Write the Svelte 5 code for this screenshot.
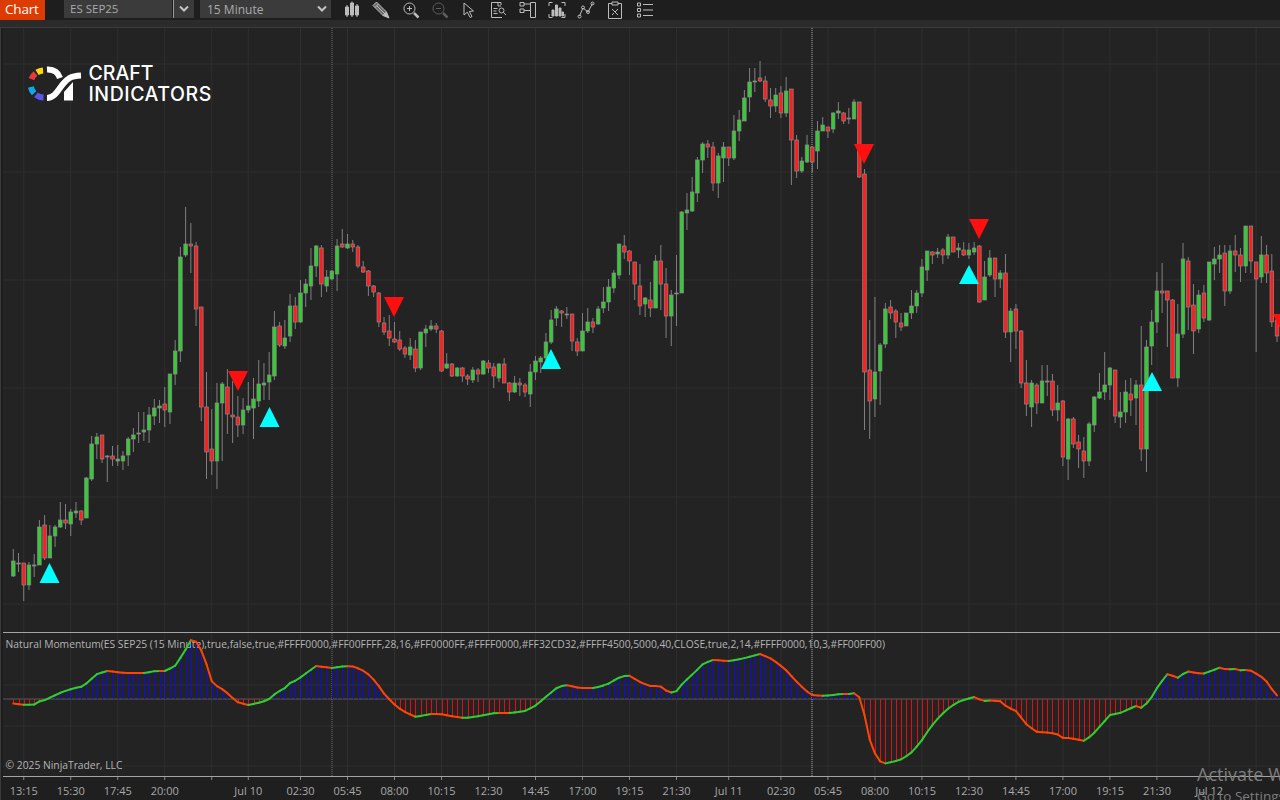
<script>
	// t, b, hi, lo, colour (1 green, 0 red, 2 doji)
	const bars = [
		[561,576,549,577,1],[563,564,553,572,2],[563,585,563,601,0],[565,585,562,590,1],[565,566,554,577,1],[527,565,520,565,1],[525,558,515,560,0],[536,558,525,558,1],
		[527,536,525,547,1],[520,527,502,528,1],[520,523,504,529,0],[512,524,509,536,1],[511,513,502,518,1],[511,520,510,525,0],[478,518,477,518,1],[444,479,436,481,1],
		[437,444,433,459,1],[435,459,435,463,0],[456,457,455,482,2],[456,459,446,466,0],[459,461,445,466,1],[456,461,451,470,1],[439,455,437,466,1],[435,439,428,452,1],
		[433,434,412,443,2],[430,432,412,441,1],[415,430,407,443,1],[408,416,399,425,1],[406,408,400,423,1],[404,410,387,427,0],[374,412,374,424,1],[351,374,340,385,1],
		[257,351,247,362,1],[244,255,207,257,1],[244,246,223,273,0],[246,309,242,326,0],[307,407,307,421,0],[407,452,372,479,0],[449,461,409,475,0],[403,461,383,489,1],
		[384,403,382,461,1],[387,414,369,434,0],[415,417,381,443,0],[417,425,396,437,0],[410,425,398,434,1],[406,410,382,413,1],[399,408,378,439,1],[384,401,360,407,1],
		[383,385,363,400,1],[375,382,352,400,1],[327,376,311,380,1],[326,345,322,347,0],[338,346,320,349,1],[306,336,294,342,1],[306,322,297,329,0],[293,322,280,323,1],
		[284,293,279,307,1],[266,286,248,300,1],[246,266,245,277,1],[248,284,245,297,0],[277,286,270,292,1],[271,279,270,280,1],[246,274,239,291,1],[244,247,229,248,0],
		[244,248,234,249,1],[244,247,240,252,0],[247,266,245,268,0],[267,272,261,273,0],[271,286,270,296,0],[286,292,285,297,0],[293,322,292,327,0],[323,332,317,335,0],
		[331,338,315,346,0],[339,342,322,343,0],[340,349,331,351,0],[348,354,346,358,0],[347,355,338,360,1],[349,368,340,372,0],[332,368,332,370,1],[329,333,325,347,1],
		[326,329,320,331,1],[326,329,323,333,0],[331,371,330,372,0],[364,368,353,369,1],[364,376,363,377,0],[368,376,367,377,1],[368,376,367,382,0],[376,379,374,385,0],
		[370,380,367,383,1],[370,374,368,382,0],[361,374,360,375,1],[363,368,360,373,0],[367,376,363,388,0],[364,378,363,382,1],[364,383,358,383,0],[383,392,382,401,0],
		[383,392,376,393,1],[383,385,378,396,0],[385,392,383,397,0],[372,394,364,407,1],[361,372,356,380,1],[358,362,356,373,1],[342,358,333,360,1],[320,342,310,344,1],
		[309,318,306,326,1],[311,313,310,327,0],[314,315,307,319,2],[314,341,314,351,0],[342,351,338,356,0],[331,351,313,351,1],[322,331,308,333,1],[322,327,318,333,0],
		[309,324,306,325,1],[302,308,287,313,1],[287,302,279,311,1],[273,288,270,293,1],[244,275,244,279,1],[246,252,235,259,0],[251,261,250,275,0],[262,284,262,300,0],
		[286,306,264,315,0],[298,304,297,317,1],[300,308,282,317,0],[261,308,255,308,1],[261,284,245,310,0],[284,316,268,338,0],[295,316,290,346,1],[293,294,255,326,2],
		[212,293,211,293,1],[210,213,193,230,1],[192,211,177,212,1],[160,193,157,202,1],[144,160,142,173,1],[144,147,140,158,0],[147,183,142,191,0],[156,183,153,198,1],
		[147,158,142,182,1],[147,158,147,166,0],[131,158,115,160,1],[120,131,110,141,1],[98,121,90,121,1],[82,97,68,112,1],[81,82,68,92,1],[78,81,61,82,0],
		[81,99,76,102,0],[100,106,88,118,0],[95,106,88,112,1],[93,113,86,118,0],[91,113,77,117,1],[89,140,89,185,0],[140,171,135,178,0],[161,171,157,173,1],
		[145,162,135,163,1],[147,162,147,172,0],[131,151,121,169,1],[125,131,117,131,1],[127,131,127,138,0],[113,129,112,133,1],[111,113,102,119,1],[113,121,112,124,0],
		[118,119,108,124,2],[102,119,99,119,1],[102,177,102,178,0],[174,372,169,430,0],[370,401,320,439,0],[372,399,297,417,1],[345,371,343,405,1],[309,344,303,348,1],
		[307,313,300,319,0],[311,322,309,338,0],[323,327,313,331,0],[313,326,313,326,1],[306,313,290,319,1],[293,306,290,313,1],[267,293,259,297,1],[251,270,251,281,1],
		[252,255,251,264,0],[252,254,248,258,1],[250,255,248,264,0],[237,255,234,259,1],[237,252,237,252,0],[248,250,243,258,1],[250,255,242,256,0],[250,255,243,259,1],
		[248,252,242,255,1],[246,302,245,303,0],[277,300,261,300,1],[258,275,250,277,1],[258,279,258,297,0],[273,279,270,288,1],[273,332,254,338,0],[311,332,308,362,1],
		[309,331,304,349,0],[331,383,330,388,0],[383,404,360,416,0],[383,407,380,427,1],[385,403,383,414,0],[381,403,365,403,1],[381,382,365,396,2],[381,410,374,416,0],
		[403,410,385,421,1],[401,457,400,466,0],[419,459,418,480,1],[419,444,417,448,0],[442,449,435,468,0],[451,461,437,478,0],[424,461,422,466,1],[397,425,396,432,1],
		[392,398,373,399,1],[385,392,352,400,1],[368,385,367,400,1],[370,416,370,423,0],[412,417,392,428,1],[392,412,380,423,1],[394,400,378,416,0],[385,398,380,425,1],
		[385,449,326,461,0],[347,449,340,472,1],[322,346,310,365,1],[291,322,272,333,1],[291,293,263,313,0],[291,300,291,347,0],[300,378,299,378,0],[334,378,304,387,1],
		[259,334,243,338,1],[261,307,257,330,0],[305,331,284,354,0],[295,329,290,333,1],[293,318,285,322,0],[262,320,262,321,1],[259,264,247,280,1],[255,259,245,273,1],
		[253,291,245,306,0],[251,291,245,294,1],[251,255,235,272,0],[255,266,248,282,0],[226,266,226,273,1],[226,261,226,273,0],[262,279,262,352,0],[255,277,236,283,1],
		[255,273,245,283,0],[271,322,254,327,0],[320,336,317,342,0]
	];
	const barX = (i) => 13.3 + 5.222 * i;

	const upMarks = [[49.5,563,583],[269.5,407,427],[551,349,369],[969,265,284],[1152,372,391]];
	const downMarks = [[238,371,391],[394,297,317],[864,144,164],[979,219,239],[1283,314,334]];

	const hLines = [64,172,280,388,497,604];
	const indLines = [685,726,766];
	const labels = { 2:'13:15', 11:'15:30', 20:'17:45', 29:'20:00', 38:'', 45:'Jul 10', 55:'02:30', 64:'05:45', 73:'08:00', 82:'10:15', 91:'12:30', 100:'14:45', 109:'17:00', 118:'19:15', 127:'21:30', 137:'Jul 11', 147:'02:30', 156:'05:45', 165:'08:00', 174:'10:15', 183:'12:30', 192:'14:45', 201:'17:00', 210:'19:15', 219:'21:30', 229:'Jul 12', 238:'' };
	const ticks = Object.keys(labels).map((k) => ({ x: barX(+k), text: labels[k] }));

	// indicator curve, page coordinates
	const curve = [[13,703.5],[25,705],[35,704.5],[40,701],[45,700],[62,692],[75,688],[83,686.5],[97,674],[107,671],[125,673],[145,673],[155,671],[165,671],[175,666],[183,654],[191,640],[197,642],[204,656],[212,682],[218,687],[224,690],[237,702],[248,705],[258,703],[268,700],[276,693],[285,688],[290,683],[297,680],[316,666],[332,668],[345,666],[354,666.5],[366,672],[376,682],[385,695],[397,707],[405,712],[416,717],[430,714],[440,714],[450,716],[465,718],[480,716],[495,713],[510,713],[525,711],[535,706],[548,695],[558,687],[566,685],[580,688],[595,688],[608,684],[618,678],[628,675],[640,682],[650,686],[660,686],[668,692],[675,693],[683,683],[695,672],[703,664],[712,660],[730,661],[745,658],[760,654],[772,659],[785,669],[795,680],[805,690],[812,695],[825,696],[840,694],[850,694],[855,693],[860,698],[865,717],[870,741],[876,756],[881,762.5],[886,763.5],[900,760],[910,754],[920,743],[930,728],[940,716],[950,707],[960,701],[974,697],[983,701],[990,700.5],[1000,701],[1007,707],[1016,711],[1027,725],[1037,732],[1047,732.5],[1057,734],[1063,738],[1070,738],[1085,741],[1094,733],[1110,715],[1120,713],[1136,706],[1142,708],[1150,700],[1157,688],[1165,677],[1168,673.5],[1175,677],[1179,678],[1184,673],[1190,671],[1195,673],[1204,673.5],[1215,669.5],[1220,667.5],[1226,669.5],[1235,669],[1243,671],[1248,669],[1256,673.5],[1265,679],[1270,687],[1280,699],[1290,708]];

	function curveY(x) {
		for (let i = 1; i < curve.length; i++) {
			if (x <= curve[i][0]) {
				const [x0, y0] = curve[i - 1];
				const [x1, y1] = curve[i];
				return y0 + ((y1 - y0) * (x - x0)) / (x1 - x0);
			}
		}
		return curve[curve.length - 1][1];
	}

	const momentum = bars.map((_, i) => {
		const x = barX(i);
		return { x, y: curveY(x) };
	});

	function ringArc(a0, a1, r = 13.5, cx = 44, cy = 84) {
		const p = (a) => `${cx + r * Math.cos((a * Math.PI) / 180)} ${cy + r * Math.sin((a * Math.PI) / 180)}`;
		return `M${p(a0)} A${r} ${r} 0 0 ${a1 > a0 ? 1 : 0} ${p(a1)}`;
	}

	const indicatorLabel = 'Natural Momentum(ES SEP25 (15 Minute),true,false,true,#FFFF0000,#FF00FFFF,28,16,#FF0000FF,#FFFF0000,#FF32CD32,#FFFF4500,5000,40,CLOSE,true,2,14,#FFFF0000,10,3,#FF00FF00)';
</script>

<div class="app">
	<header class="toolbar">
		<div class="tab">Chart</div>
		<div class="combo instrument">
			<span class="field">ES SEP25</span>
			<span class="arrow"><svg width="12" height="8" viewBox="0 0 12 8"><path d="M2 1.5 6 5.5 10 1.5" /></svg></span>
		</div>
		<div class="combo interval">
			<span>15 Minute</span>
			<svg width="12" height="8" viewBox="0 0 12 8"><path d="M2 1.5 6 5.5 10 1.5" /></svg>
		</div>
		<div class="icons">
			<svg viewBox="0 0 18 18"><path class="solid" d="M2.500 6h3v8h-3zM7.500 2h3v12h-3zM12.500 5h3v9h-3z" /><path d="M4 4v12M9 0.500v15.500M14 3v13" /></svg>
			<svg viewBox="0 0 18 18"><path class="mid" d="M1 4.500 4.500 1 14.500 11 11 14.500Z" /><path d="M3 6.500 6.500 3M5 5l8 8" /><path class="solid" d="M11 14.500 14.500 11 17 17Z" /></svg>
			<svg viewBox="0 0 18 18"><circle cx="7.500" cy="7.500" r="5.500" /><path d="M5 7.500h5M7.500 5v5" /><path class="thick" d="M12 12 16.500 16.500" /></svg>
			<svg class="dim" viewBox="0 0 18 18"><circle cx="7.500" cy="7.500" r="5.500" /><path d="M5 7.500h5" /><path class="thick" d="M12 12 16.500 16.500" /></svg>
			<svg viewBox="0 0 18 18"><path d="M4 2 4 14 7.300 11.200 10.200 16.500 12 15.500 9.300 10.500 13.500 10Z" /></svg>
			<svg viewBox="0 0 18 18"><path d="M12 4V1.500H2.500v15H13M9 1.500V5h3M4.500 7.500h4M4.500 10h3M4.500 12.500h4" /><circle cx="12.500" cy="9.500" r="2.500" /><path d="M14.300 11.300 17 14" /></svg>
			<svg viewBox="0 0 18 18"><path d="M1 1.500h4v3.500H1zM1 8h4v3.500H1zM5 3h6.500M5 9.500h6.500M11.500 1.500h5v15h-5z" /></svg>
			<svg viewBox="0 0 18 18"><path d="M1 5V1.500h3.500M13.500 1.500H17V5M1 13v3.500h3.500M13.500 16.500H17V13" /><path class="solid" d="M4 9h2v6H4zM7.500 4h2v11h-2zM11 7h2v8h-2zM14 11h1.500v4H14z" /></svg>
			<svg viewBox="0 0 18 18"><path d="M2.500 15 6 7 11 11 15.500 2.500" /><circle cx="2.500" cy="15.500" r="1.500" /><circle cx="6" cy="6.500" r="1.500" /><circle cx="11" cy="11" r="1.500" /><circle cx="15.500" cy="2.500" r="1.500" /></svg>
			<svg viewBox="0 0 18 18"><path d="M6 2.500H2.500v15h13v-15H12M6 1h6v3H6zM6 8l6 6M12 8l-3 3M6 14l2-2" /></svg>
			<svg viewBox="0 0 18 18"><path d="M1.500 2h3v3h-3zM1.500 7.500h3v3h-3zM1.500 13h3v3h-3zM7 3.500h10M7 9h10M7 14.500h10" /></svg>
		</div>
	</header>
	<div class="strip"></div>

	<div class="chart">
		<svg class="pane" width="1277" height="604" viewBox="3 28 1277 604">
			{#each hLines as y}
				<line class="grid" x1="3" x2="1280" y1={y} y2={y} />
			{/each}
			{#each ticks as t}
				<line class="grid" x1={t.x} x2={t.x} y1="28" y2="632" />
			{/each}
			<line class="session dark" x1="332" x2="332" y1="28" y2="632" />
			<line class="session" x1="812" x2="812" y1="28" y2="632" />

			{#each bars as [t, b, hi, lo, c], i}
				<line class="wick" x1={barX(i)} x2={barX(i)} y1={hi} y2={lo} />
				<rect class="body c{c}" x={barX(i) - 1.8} y={t} width="3.6" height={b - t} />
			{/each}

			{#each upMarks as [x, top, base]}
				<polygon class="up" points="{x},{top} {x + 10},{base} {x - 10},{base}" />
			{/each}
			{#each downMarks as [x, top, tip]}
				<polygon class="down" points="{x - 10},{top} {x + 10},{top} {x},{tip}" />
			{/each}

			<g class="logo">
				<path d={ringArc(-121, -94)} stroke="#ffd90f" />
				<path d={ringArc(-159, -129)} stroke="#e8393c" />
				<path d={ringArc(167, 137)} stroke="#12a5e8" />
				<path d={ringArc(127, 92)} stroke="#5a55e6" />
				<path d="M47 69.500Q57 69 60 78" stroke="#fff" />
				<path d="M47 98C55 98 58 90 63 84C67 79 70 76 81 75.500" stroke="#fff" />
				<polygon points="64,92 73,82 73,100.500 64,100.500" />
			</g>
			<text class="brand" x="88.500" y="80">CRAFT</text>
			<text class="brand wide" x="88.500" y="101">INDICATORS</text>
		</svg>
		<div class="sep"></div>

		<svg class="pane" width="1277" height="143" viewBox="3 633 1277 143">
			{#each indLines as y}
				<line class="grid" x1="3" x2="1280" y1={y} y2={y} />
			{/each}
			{#each ticks as t}
				<line class="grid" x1={t.x} x2={t.x} y1="633" y2="776" />
			{/each}
			<line class="zero" x1="3" x2="1280" y1="699" y2="699" />
			<line class="session dark" x1="332" x2="332" y1="633" y2="776" />
			<line class="session" x1="812" x2="812" y1="633" y2="776" />

			<text class="label" x="5.500" y="648">{indicatorLabel}</text>
			<text class="label" x="5.500" y="769">© 2025 NinjaTrader, LLC</text>

			{#each momentum as p}
				<line class={p.y < 699 ? 'hist above' : 'hist below'} x1={Math.round(p.x) + 0.5} x2={Math.round(p.x) + 0.5} y1="699" y2={p.y} />
			{/each}
			{#each momentum as p, i}
				{#if i > 0}
					<line
						class={p.y < momentum[i - 1].y ? 'trend rise' : 'trend fall'}
						x1={momentum[i - 1].x}
						y1={momentum[i - 1].y}
						x2={p.x}
						y2={p.y}
					/>
				{/if}
			{/each}
		</svg>
		<div class="sep"></div>

		<svg class="pane axis" width="1277" height="23" viewBox="3 777 1277 23">
			{#each ticks as t}
				<line class="tick" x1={t.x} x2={t.x} y1="777" y2="780" />
				<text class="time" x={t.x} y="795">{t.text}</text>
			{/each}
		</svg>
	</div>

	<div class="activate">
		<div class="big">Activate Windows</div>
		<div class="small">Go to Settings to activate Windows.</div>
	</div>
</div>

<style>
	:global(body) {
		margin: 0;
		background: #1d1d1d;
	}

	.app {
		position: relative;
		width: 1280px;
		height: 800px;
		overflow: hidden;
		display: flex;
		flex-direction: column;
		background: #1d1d1d;
		font-family: "Open Sans", "Liberation Sans", sans-serif;
	}

	.toolbar {
		display: flex;
		align-items: flex-start;
		height: 20px;
		background: #1e1e1e;
	}

	.tab {
		width: 40px;
		height: 20.500px;
		padding-left: 5px;
		background: #dc3c02;
		color: #fff;
		font-size: 13.500px;
		letter-spacing: -0.2px;
		line-height: 18px;
	}

	.combo {
		display: flex;
		height: 18px;
		font-size: 11.500px;
		line-height: 17px;
		color: #aaa;
	}

	.instrument {
		margin-left: 19px;
		width: 130px;
		gap: 2px;
	}

	.field {
		width: 102px;
		padding-left: 6px;
		background: #3b3b3b;
	}

	.arrow {
		flex: 1;
		display: flex;
		align-items: center;
		justify-content: center;
		background: #3b3b3b;
		border-left: 1px solid #999;
		margin-left: -1px;
	}

	.interval {
		margin-left: 6px;
		width: 121px;
		padding: 0 3px 0 7px;
		justify-content: space-between;
		align-items: center;
		background: #3b3b3b;
		font-size: 12px;
	}

	.combo svg path {
		fill: none;
		stroke: #c4c4c4;
		stroke-width: 2;
	}

	.icons {
		display: flex;
		gap: 11.250px;
		margin-left: 12px;
		padding-top: 0.500px;
	}

	.icons svg {
		width: 18px;
		height: 18px;
		fill: none;
		stroke: #bcbcbc;
		stroke-width: 1;
	}

	.icons .solid {
		fill: #bcbcbc;
	}

	.icons .mid {
		fill: #6a6a6a;
	}

	.icons .thick {
		stroke-width: 2.500;
	}

	.icons .dim {
		stroke: #5e5e5e;
	}

	.strip {
		height: 7px;
		background: #2b2b2b;
	}

	.chart {
		flex: 1;
		display: flex;
		flex-direction: column;
		padding-left: 2px;
		border-left: 1px solid #3b3b3b;
		border-top: 1px solid #3b3b3b;
		margin-top: 0;
	}

	.pane {
		display: block;
		background: #232323;
	}

	.axis {
		background: #1f1f1f;
	}

	.sep {
		height: 1px;
		background: #a4a4a4;
	}

	.grid {
		stroke: #2f2f2f;
		stroke-width: 1;
	}

	.zero {
		stroke: #3e3e3e;
		stroke-width: 2;
	}

	.session {
		stroke: #b0b0b0;
		stroke-width: 1;
		stroke-dasharray: 1 1;
	}

	.session.dark {
		stroke: #707070;
	}

	.wick {
		stroke: #808080;
		stroke-width: 1;
	}

	.body {
		stroke: #8a8a8a;
		stroke-width: 0.700;
	}

	.c0 {
		fill: #ff1e1e;
	}

	.c1 {
		fill: #35cb35;
	}

	.c2 {
		fill: #8a8a8a;
	}

	.up {
		fill: #00ffff;
	}

	.down {
		fill: #ff1010;
	}

	.logo path {
		fill: none;
		stroke-width: 6;
	}

	.logo polygon {
		fill: #fff;
	}

	.brand {
		fill: #fff;
		font-family: Inter, "Open Sans", sans-serif;
		font-size: 19.500px;
		font-weight: 500;
	}

	.wide {
		letter-spacing: 0.55px;
	}

	.label {
		fill: #b4b4b4;
		font-size: 10.300px;
	}

	.hist {
		stroke-width: 1;
	}

	.hist.above {
		stroke: #0a0af5;
	}

	.hist.below {
		stroke: #e01010;
	}

	.trend {
		stroke-width: 2;
		stroke-linecap: round;
	}

	.trend.rise {
		stroke: #32cd32;
	}

	.trend.fall {
		stroke: #ff4500;
	}

	.tick {
		stroke: #8a8a8a;
	}

	.time {
		fill: #a8a8a8;
		font-size: 11px;
		text-anchor: middle;
	}

	.activate {
		position: absolute;
		left: 1197px;
		top: 762px;
		white-space: nowrap;
		color: #7d7d7d;
		font-family: "Open Sans", sans-serif;
	}

	.big {
		font-size: 18px;
		line-height: 24px;
	}

	.small {
		font-size: 13.500px;
		line-height: 20px;
	}
</style>
